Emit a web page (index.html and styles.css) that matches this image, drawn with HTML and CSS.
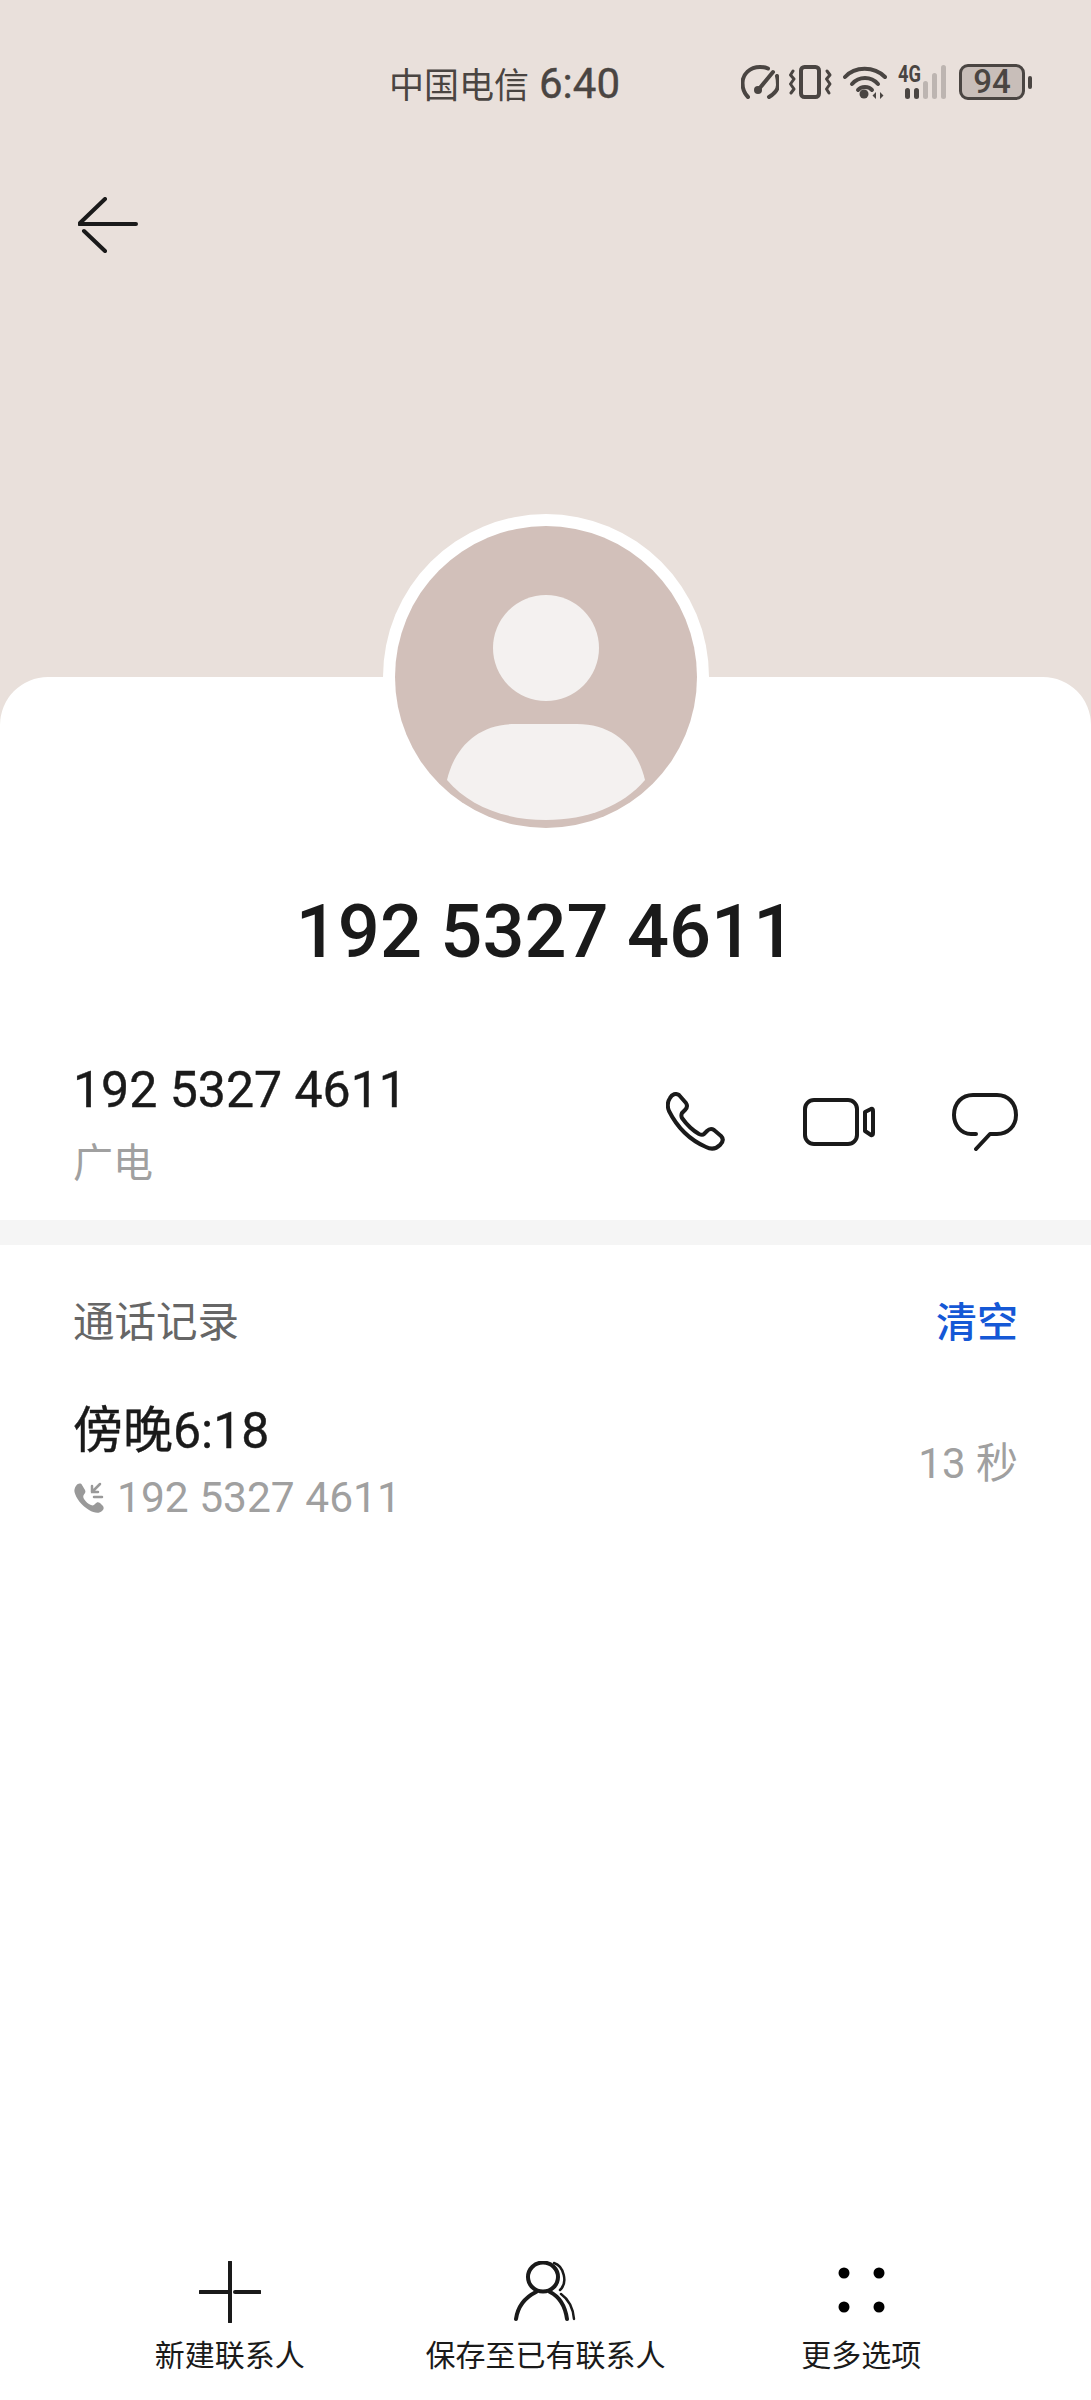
FILE: index.html
```html
<!DOCTYPE html>
<html lang="zh-CN">
<head>
    <meta charset="UTF-8">
    <meta name="viewport" content="width=device-width, initial-scale=1.0">
    <title>联系人详情</title>
    <link rel="stylesheet" href="styles.css">
</head>
<body>
    <header class="top">
        <div class="status-bar">
            <div class="carrier"><span>中国电信</span><span class="clock">6:40</span></div>
            <div class="status-icons">
                <svg class="gauge" viewBox="0 0 38 34" width="38" height="34">
                    <path d="M7 32C3 28 1.500 22 1.500 18C1.500 9 9 2 19 2C22 2 25 2.500 27 3.500" class="st"/>
                    <path d="M36 11C37 14 37 17 37 20C37 25 33 29 28 32" class="st"/>
                    <path d="M18 24L32 7" class="st"/>
                    <circle cx="17" cy="25" r="4" class="st-fill"/>
                </svg>
                <svg viewBox="0 0 43 34" width="43" height="34">
                    <rect x="12" y="2" width="18" height="30" rx="3.500" class="st"/>
                    <path d="M4 6L1.500 10L5 14L1.500 19L5 24L2 28" class="st st-thin"/>
                    <path d="M38 6L41 10L37.500 14L41 19L37.500 24L40 28" class="st st-thin"/>
                </svg>
                <svg viewBox="0 0 44 34" width="44" height="34">
                    <path d="M2 12C12 1 31 1 42 12" class="st"/>
                    <path d="M9 19C16 11 28 11 35 19" class="st"/>
                    <path d="M15 25C18 21 26 21 29 25" class="st"/>
                    <circle cx="21" cy="29" r="4.500" class="st-fill"/>
                    <path d="M33 27V34L29.500 30.500ZM37 27V34L40.500 30.500Z" class="st-fill"/>
                </svg>
                <svg viewBox="0 0 48 34" width="48" height="34">
                    <text x="0" y="17" class="net" textLength="23" lengthAdjust="spacingAndGlyphs">4G</text>
                    <rect x="7" y="23" width="5" height="11" rx="2.500" class="st-fill"/>
                    <rect x="16" y="23" width="5" height="11" rx="2.500" class="st-fill"/>
                    <rect x="25" y="16" width="5" height="18" rx="2.500" class="bar-off"/>
                    <rect x="34" y="8" width="5" height="26" rx="2.500" class="bar-off"/>
                    <rect x="43" y="0" width="5" height="34" rx="2.500" class="bar-off"/>
                </svg>
                <div class="battery">
                    <span class="battery-body">94</span>
                    <span class="battery-cap"></span>
                </div>
            </div>
        </div>
        <button class="back-btn">
            <svg viewBox="0 0 60 56" width="60" height="56">
                <path d="M1.500 27H58M27 2L2 26M6 34L27 54" class="line"/>
            </svg>
        </button>
    </header>

    <main class="card">
        <div class="avatar">
            <svg viewBox="0 0 302 302" width="302" height="302">
                <circle cx="151" cy="151" r="151" fill="#d2c0ba"/>
                <circle cx="151" cy="122" r="53" fill="#f4f1f0"/>
                <path d="M52 254C60 220 84 198 120 198H182C218 198 242 220 250 254C228 280 192 294 151 294C110 294 74 280 52 254Z" fill="#f4f1f0"/>
            </svg>
        </div>
        <h1 class="name">192 5327 4611</h1>

        <section class="number-row">
            <div>
                <div class="number">192 5327 4611</div>
                <div class="operator">广电</div>
            </div>
            <div class="actions">
                <svg viewBox="0 0 60 60" width="60" height="60">
                    <path d="M4 6C6 2 10 1 13 3L20 11C22 14 21 16 19 18L16 21C15 23 15 24 16 26C21 33 26 38 33 42C35 43 37 43 38 42L41 39C43 37 45 36 48 38L55 44C58 47 57 50 54 53C50 57 46 58 40 55C24 48 11 35 3 19C1 14 2 9 4 6Z" class="line"/>
                </svg>
                <svg viewBox="0 0 72 48" width="72" height="48">
                    <rect x="2" y="2" width="52" height="44" rx="9" class="line"/>
                    <path d="M62 14L68 11C69.500 10.500 70 11 70 13V35C70 37 69.500 37.500 68 37L62 33Z" class="line"/>
                </svg>
                <svg viewBox="0 0 66 58" width="66" height="58">
                    <path d="M24 41H19C9 41 2 32 2 22C2 10 10 2 21 2H45C56 2 64 10 64 22C64 33 56 41 45 41H38L24 56" class="line"/>
                </svg>
            </div>
        </section>

        <div class="band"></div>

        <section class="history">
            <div class="history-head">
                <span class="history-title">通话记录</span>
                <span class="clear">清空</span>
            </div>
            <div class="record">
                <div>
                    <div class="record-time">傍晚6:18</div>
                    <div class="record-number">
                        <svg viewBox="0 0 32 32" width="32" height="32">
                            <path d="M3 4C5 1 8 1 9 3L12 8C13 10 12 11 11 12.500C10 14 10 15 11 17C13 20 15 22 18 23C20 24 21 23 22 22C24 20 25 20 27 21L30 24C31 26 31 27 29 29C26 32 21 31 16 28C8 23 3 16 1.500 10C1 8 2 5 3 4Z" fill="#999"/>
                            <path d="M27 2L19 10M19 4V10H25M21 15H29" class="line-small"/>
                        </svg>
                        <span>192 5327 4611</span>
                    </div>
                </div>
                <span class="duration">13 秒</span>
            </div>
        </section>
    </main>

    <nav class="bottom-bar">
        <div class="tool">
            <svg viewBox="0 0 62 62" width="62" height="62">
                <path d="M31 1V61M1 31H31M36 31H61" class="line"/>
            </svg>
            <span>新建联系人</span>
        </div>
        <div class="tool">
            <svg viewBox="0 0 62 62" width="62" height="62">
                <ellipse cx="29" cy="16" rx="15" ry="14.500" class="line"/>
                <path d="M2 58C4 44 12 36 22 31M36 31C46 36 51 44 53 58" class="line"/>
                <path d="M40 2C50 5 54 22 46 29M47 33C54 38 59 46 60 58" class="line-thin"/>
            </svg>
            <span>保存至已有联系人</span>
        </div>
        <div class="tool">
            <svg viewBox="0 0 62 62" width="62" height="62">
                <circle cx="14" cy="12" r="5.500"/>
                <circle cx="49" cy="12" r="5.500"/>
                <circle cx="14" cy="46" r="5.500"/>
                <circle cx="49" cy="46" r="5.500"/>
            </svg>
            <span>更多选项</span>
        </div>
    </nav>
</body>
</html>
```

FILE: styles.css
```css
* {
    box-sizing: border-box;
}

body {
    margin: 0;
    height: 2400px;
    display: flex;
    flex-direction: column;
    background-color: #fff;
    color: #1a1a1a;
    font-family: Roboto, "Noto Sans CJK SC", sans-serif;
    overflow: hidden;
}

svg {
    display: block;
    flex-shrink: 0;
}

/* shared strokes */
.line {
    fill: none;
    stroke: #1a1a1a;
    stroke-width: 4;
    stroke-linecap: round;
    stroke-linejoin: round;
}

.line-thin {
    fill: none;
    stroke: #1a1a1a;
    stroke-width: 2.500;
    stroke-linecap: round;
}

.line-small {
    fill: none;
    stroke: #999;
    stroke-width: 2.500;
    stroke-linecap: round;
}

.st {
    fill: none;
    stroke: #4a4542;
    stroke-width: 4;
    stroke-linecap: round;
    stroke-linejoin: round;
}

.st-thin {
    stroke-width: 3;
}

.st-fill {
    fill: #4a4542;
}

.bar-off {
    fill: #bdb5b1;
}

/* top area */
.top {
    height: 725px;
    flex-shrink: 0;
    padding-top: 52px;
    background-color: #e9e0db;
}

.status-bar {
    height: 60px;
    padding: 0 59px 0 389px;
    display: flex;
    align-items: center;
    justify-content: space-between;
}

.carrier {
    display: flex;
    align-items: baseline;
    gap: 10px;
    font-size: 35px;
    color: #4a4542;
    white-space: nowrap;
}

.clock {
    font-size: 42px;
    -webkit-text-stroke: 0.4px #4a4542;
}

.status-icons {
    display: flex;
    align-items: center;
    gap: 11px;
}

.gauge {
    margin-right: -1px;
}

.net {
    font-family: Roboto, sans-serif;
    font-size: 24px;
    font-weight: 700;
    fill: #4a4542;
}

.battery {
    display: flex;
    align-items: center;
    gap: 3px;
    margin-left: 2px;
}

.battery-body {
    width: 66px;
    height: 36px;
    border: 3.500px solid #4a4542;
    border-radius: 9px;
    background-color: #c8beb9;
    color: #4a4542;
    font-size: 33px;
    font-weight: 500;
    line-height: 29px;
    text-align: center;
}

.battery-cap {
    width: 4px;
    height: 13px;
    border-radius: 2px;
    background-color: #4a4542;
}

.back-btn {
    display: block;
    margin: 85px 0 0 78px;
    padding: 0;
    border: none;
    background: none;
}

/* white sheet */
.card {
    position: relative;
    flex: 1;
    margin-top: -48px;
    padding-top: 213px;
    border-radius: 48px 48px 0 0;
    background-color: #fff;
}

.avatar {
    position: absolute;
    top: -163px;
    left: 50%;
    margin-left: -163px;
    padding: 12px;
    border-radius: 50%;
    background-color: #fff;
}

.name {
    margin: 0;
    font-size: 74px;
    font-weight: 500;
    line-height: 84px;
    text-align: center;
}

.number-row {
    margin-top: 86px;
    padding: 0 73px;
    display: flex;
    align-items: center;
    justify-content: space-between;
}

.number {
    font-size: 50px;
    line-height: 60px;
    -webkit-text-stroke: 0.4px #1a1a1a;
}

.operator {
    margin-top: 19px;
    font-size: 40px;
    line-height: 50px;
    color: #a0a0a0;
}

.actions {
    display: flex;
    align-items: center;
    gap: 77px;
    margin-bottom: 5px;
}

.band {
    height: 25px;
    margin-top: 31px;
    background-color: #f5f5f5;
}

.history {
    padding: 52px 73px 0;
}

.history-head {
    display: flex;
    align-items: center;
    justify-content: space-between;
    font-size: 41.500px;
    line-height: 52px;
}

.history-title {
    color: #666;
}

.clear {
    font-size: 41px;
    font-weight: 500;
    color: #1558d6;
}

.record {
    margin-top: 52px;
    display: flex;
    align-items: center;
    justify-content: space-between;
}

.record-time {
    font-size: 50px;
    line-height: 60px;
    -webkit-text-stroke: 0.4px #1a1a1a;
}

.record-number {
    margin-top: 11px;
    display: flex;
    align-items: center;
    gap: 12px;
    font-size: 42.500px;
    line-height: 52px;
    color: #a0a0a0;
}

.duration {
    margin-bottom: 6px;
    font-size: 42px;
    color: #a0a0a0;
}

/* bottom tools */
.bottom-bar {
    height: 139px;
    flex-shrink: 0;
    padding: 0 72px;
    display: grid;
    grid-template-columns: repeat(3, 1fr);
    background-color: #fff;
}

.tool {
    display: flex;
    flex-direction: column;
    align-items: center;
    font-size: 30px;
    line-height: 38px;
    white-space: nowrap;
}

.tool span {
    margin-top: 14px;
}
```
